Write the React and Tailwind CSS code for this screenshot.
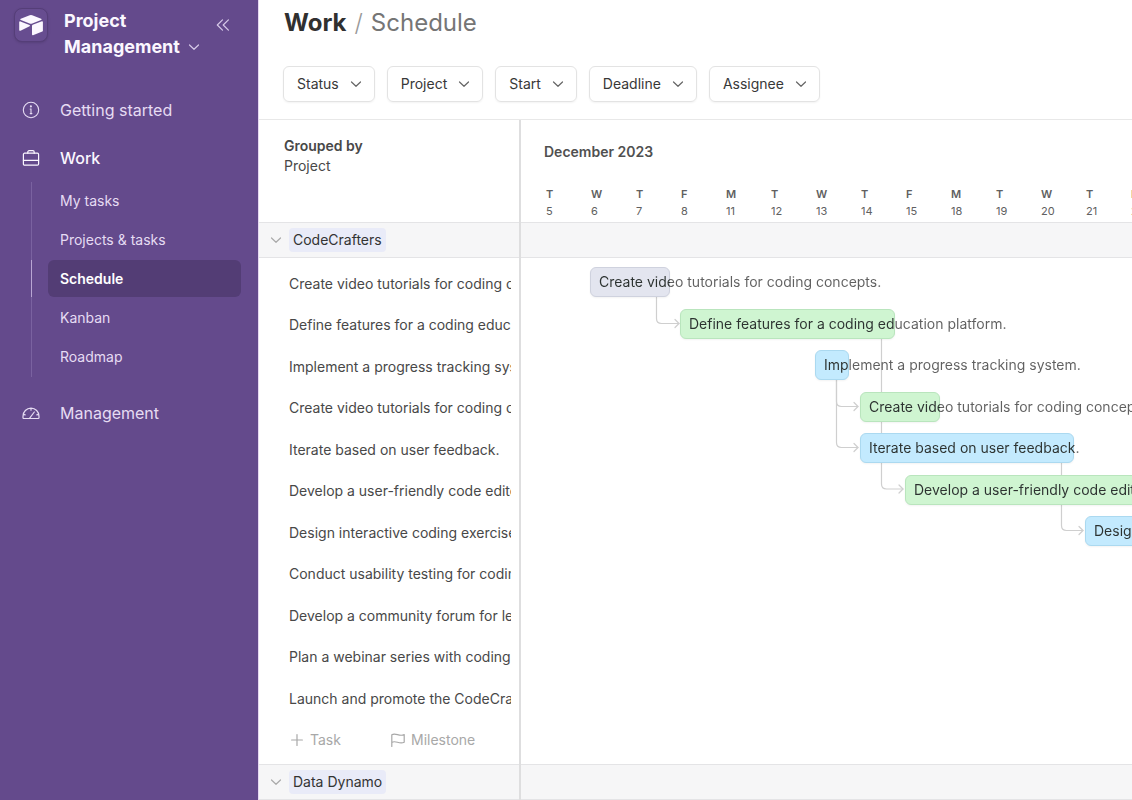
import React from "react";

const filters = ["Status", "Project", "Start", "Deadline", "Assignee"];

const views = ["My tasks", "Projects & tasks", "Schedule", "Kanban", "Roadmap"];

const tasks = [
  "Create video tutorials for coding concepts.",
  "Define features for a coding education platform.",
  "Implement a progress tracking system.",
  "Create video tutorials for coding concepts.",
  "Iterate based on user feedback.",
  "Develop a user-friendly code editor.",
  "Design interactive coding exercises.",
  "Conduct usability testing for coding platform.",
  "Develop a community forum for learners.",
  "Plan a webinar series with coding experts.",
  "Launch and promote the CodeCrafters platform.",
];

const days = [
  ["T", 5], ["W", 6], ["T", 7], ["F", 8], ["M", 11], ["T", 12], ["W", 13],
  ["T", 14], ["F", 15], ["M", 18], ["T", 19], ["W", 20], ["T", 21], ["F", 22],
];

const tones = {
  gray: "bg-[#e3e5ef] border-[#cfd2de]",
  green: "bg-[#cff5d1] border-[#b9e5bd]",
  blue: "bg-[#c3eafe] border-[#abd9f0]",
};

const bars = [
  { left: 69, top: 9, width: 80, tone: "gray" },
  { left: 159, top: 51, width: 215, tone: "green" },
  { left: 294, top: 92, width: 34, tone: "blue" },
  { left: 339, top: 134, width: 80, tone: "green" },
  { left: 339, top: 175, width: 214, tone: "blue" },
  { left: 384, top: 217, width: 260, tone: "green" },
  { left: 564, top: 258, width: 170, tone: "blue" },
];

const links = [
  "M135.5 39V60.5Q135.5 65.5 140.5 65.5H158",
  "M315.5 122V143.5Q315.5 148.5 320.5 148.5H337",
  "M315.5 122V184.5Q315.5 189.5 320.5 189.5H337",
  "M360.5 81V226Q360.5 231 365.5 231H382",
  "M540.5 205V267.5Q540.5 272.5 545.5 272.5H562",
];

const arrows = [[158, 65.5], [337, 148.5], [337, 189.5], [382, 231], [562, 272.5]];

function Chevron({ className = "" }) {
  return (
    <svg viewBox="0 0 12 12" className={`h-3 w-3 shrink-0 ${className}`} fill="none" stroke="currentColor" strokeWidth="1.2" strokeLinecap="round" strokeLinejoin="round" aria-hidden="true">
      <path d="M1.5 4 6 8.300 10.500 4" />
    </svg>
  );
}

function Logo() {
  return (
    <span className="flex h-[34px] w-[34px] shrink-0 items-center justify-center rounded-lg border border-[#553e78] bg-[#674d90] shadow-sm">
      <svg viewBox="0 0 26 22" className="h-[22px] w-[26px]" fill="#fbf7ff" aria-hidden="true">
        <path d="M11.700 1.200a3.200 3.200 0 0 1 2.500 0l8.900 3.600c.7.3.7 1 0 1.300l-8.900 3.500a3.800 3.800 0 0 1-2.600 0L2.800 6.100c-.7-.3-.7-1 0-1.300z" />
        <path d="M14 11.800c0-.4.3-.8.7-1l9.200-3.500c.5-.2 1 .1 1 .6v8.800c0 .4-.2.7-.6.9l-9.300 3.600c-.5.200-1-.1-1-.6z" />
        <path d="M11.600 12.200 2.500 16.700c-.6.3-1.300-.1-1.300-.8V8.200c0-.7.6-1 1.200-.8l9.100 3.600c.6.200.6.900.1 1.200z" />
      </svg>
    </span>
  );
}

function InfoIcon() {
  return (
    <svg viewBox="0 0 18 18" className="h-[18px] w-[18px] shrink-0" fill="none" stroke="currentColor" strokeWidth="1.1" strokeLinecap="round" aria-hidden="true">
      <circle cx="9" cy="9" r="7.700" />
      <path d="M8.200 8H9v4.600M8.200 12.600h1.700" />
      <circle cx="8.900" cy="5.400" r=".5" fill="currentColor" />
    </svg>
  );
}

function BriefcaseIcon() {
  return (
    <svg viewBox="0 0 18 18" className="h-[18px] w-[18px] shrink-0" fill="none" stroke="currentColor" strokeWidth="1.2" strokeLinecap="round" strokeLinejoin="round" aria-hidden="true">
      <rect x="1.400" y="4.200" width="15.200" height="12" rx="1.200" />
      <path d="M5.800 4.200V3a1.300 1.300 0 0 1 1.300-1.300h3.800A1.300 1.300 0 0 1 12.200 3v1.200M1.400 11.300h15.200" />
    </svg>
  );
}

function GaugeIcon() {
  return (
    <svg viewBox="0 0 18 18" className="h-[18px] w-[18px] shrink-0" fill="none" stroke="currentColor" strokeWidth="1.2" strokeLinecap="round" strokeLinejoin="round" aria-hidden="true">
      <path d="M1 13.800v-1.600a8 8 0 0 1 16 0v1.600a.7.7 0 0 1-.7.700H1.700a.7.7 0 0 1-.7-.700zM9 4.200v2M1.300 10.300l1.900.5M16.700 10.300l-1.900.5M7.500 14.300l4.800-6.300" />
    </svg>
  );
}

function Sidebar() {
  return (
    <aside className="flex w-[258px] shrink-0 flex-col bg-[#644a8c] text-[#e6dcf3]">
      <div className="flex items-start pl-3.5 pr-7 pt-2">
        <Logo />
        <h2 className="ml-4 flex-1 text-lg font-bold leading-[26px] text-[#fbf7ff]">
          <button type="button" className="text-left">
            Project
            <span className="flex items-center gap-2">
              Management
              <Chevron className="text-[#d6c9e8]" />
            </span>
          </button>
        </h2>
        <button type="button" aria-label="Collapse sidebar" className="mt-2.5 text-[#d6c9e8]">
          <svg viewBox="0 0 14 14" className="h-3.5 w-3.5" fill="none" stroke="currentColor" strokeWidth="1.2" strokeLinecap="round" strokeLinejoin="round" aria-hidden="true">
            <path d="M6.500 1.800 1.300 7l5.200 5.200M12.400 1.800 7.200 7l5.200 5.200" />
          </svg>
        </button>
      </div>
      <nav className="flex flex-col pl-[22px] pr-[17px] pt-[26px]">
        <a href="#start" className="flex h-12 items-center gap-5 text-base">
          <InfoIcon />
          Getting started
        </a>
        <a href="#work" className="flex h-12 items-center gap-5 text-base font-medium text-[#fbf7ff]">
          <BriefcaseIcon />
          Work
        </a>
        <ul className="ml-[9px] flex flex-col gap-0.5 border-l border-[#7a62a0] pb-0.5">
          {views.map((v) => {
            const on = v === "Schedule";
            return (
              <li key={v} className={on ? "-ml-px border-l border-[#b9a6d3] pl-4" : "pl-4"}>
                <a
                  href={"#" + v}
                  aria-current={on ? "page" : undefined}
                  className={`flex h-[37px] items-center rounded-md pl-3 text-sm ${on ? "bg-[#533d75] font-semibold text-white" : ""}`}
                >
                  {v}
                </a>
              </li>
            );
          })}
        </ul>
        <a href="#management" className="mt-3 flex h-12 items-center gap-5 text-base">
          <GaugeIcon />
          Management
        </a>
      </nav>
    </aside>
  );
}

function GroupRow({ name }) {
  return (
    <div className="flex h-9 items-center border-y border-[#e4e4e6] bg-[#f6f6f7]">
      {name && (
        <button type="button" className="ml-[11px] flex items-center gap-[7px] text-sm text-[#333]">
          <Chevron className="text-[#aaa]" />
          <span className="rounded bg-[#e9ebf8] px-1 py-0.5">{name}</span>
        </button>
      )}
    </div>
  );
}

function TaskList() {
  return (
    <section className="w-[262px] shrink-0 border-r-2 border-[#dededf]">
      <div className="h-[102px] pl-[25px] pt-4 text-sm text-[#484848]">
        <p className="font-semibold">Grouped by</p>
        <p>Project</p>
      </div>
      <GroupRow name="CodeCrafters" />
      <ul className="overflow-hidden pl-[30px] pr-2 pt-[5px] text-sm text-[#484848]">
        {tasks.map((t, i) => (
          <li key={i} className="flex items-center overflow-hidden whitespace-nowrap odd:h-[41px] even:h-[42px]">
            {t}
          </li>
        ))}
      </ul>
      <div className="flex h-[45px] items-center pb-[3px] pl-8 text-sm text-[#a8a8a8]">
        <button type="button" className="flex w-[100px] items-center gap-[7px]">
          <svg viewBox="0 0 12 12" className="h-3 w-3" fill="none" stroke="currentColor" strokeWidth="1.2" strokeLinecap="round" aria-hidden="true">
            <path d="M6 .6v10.800M.6 6h10.800" />
          </svg>
          Task
        </button>
        <button type="button" className="flex items-center gap-1.5">
          <svg viewBox="0 0 14 14" className="h-3.5 w-3.5" fill="none" stroke="currentColor" strokeWidth="1.2" strokeLinecap="round" strokeLinejoin="round" aria-hidden="true">
            <path d="M.8 13.400V1.800c4-2.400 7.400 2.200 12.400-.2v7.600c-5 2.400-8.400-2.200-12.400.2" />
          </svg>
          Milestone
        </button>
      </div>
      <GroupRow name="Data Dynamo" />
    </section>
  );
}

function Timeline() {
  return (
    <section className="min-w-0 flex-1 overflow-hidden">
      <div className="h-[102px] pt-[22px] text-[#505050]">
        <p className="pl-[23px] text-sm font-semibold">December 2023</p>
        <ol className="mt-6 flex pl-[25px] text-[11px] leading-[17px] text-[#606060]">
          {days.map(([d, n]) => (
            <li key={n} className="w-[45px] shrink-0">
              <span className="block font-semibold">{d}</span>
              <span className="block">{n}</span>
            </li>
          ))}
        </ol>
      </div>
      <GroupRow />
      <div className="relative h-[506px]">
        <svg className="absolute left-0 top-0 h-full w-[700px]" fill="none" stroke="#cfcfcf" strokeWidth="1.2" strokeLinecap="round" strokeLinejoin="round" aria-hidden="true">
          {links.map((d) => (
            <path key={d} d={d} />
          ))}
          {arrows.map(([x, y]) => (
            <path key={x + "-" + y} d={`M${x - 4} ${y - 4}l4 4l-4 4`} />
          ))}
        </svg>
        {bars.map((b, i) => (
          <div
            key={i}
            className={`absolute flex h-[30px] items-center rounded-md border pl-2 text-sm shadow-xs ${tones[b.tone]}`}
            style={{ left: b.left, top: b.top, width: b.width }}
          >
            <span
              className="whitespace-nowrap bg-clip-text text-transparent"
              style={{ backgroundImage: `linear-gradient(to right, #2c3230 ${b.width - 9}px, #606060 ${b.width - 9}px)` }}
            >
              {tasks[i]}
            </span>
          </div>
        ))}
      </div>
      <GroupRow />
    </section>
  );
}

export default function App() {
  return (
    <div className="flex h-screen overflow-hidden bg-white font-['Inter',sans-serif]">
      <Sidebar />
      <main className="flex min-w-0 flex-1 flex-col border-l border-[#e6d8f2]">
        <header className="border-b border-[#e8e8e8] pb-[17px] pl-6 pt-[7px]">
          <h1 className="flex gap-2 pl-px text-2xl text-[#757575]">
            <span className="font-bold text-[#303030]">Work</span>
            <span className="font-light text-[#999]">/</span>
            <span>Schedule</span>
          </h1>
          <div className="mt-[27px] flex gap-3">
            {filters.map((f) => (
              <button key={f} type="button" className="flex h-9 items-center gap-[11px] rounded-md border border-[#e3e3e3] pl-[13px] pr-3 text-sm text-[#383838] shadow-xs">
                {f}
                <Chevron className="text-[#666]" />
              </button>
            ))}
          </div>
        </header>
        <div className="flex min-h-0 flex-1 items-stretch">
          <TaskList />
          <Timeline />
        </div>
      </main>
    </div>
  );
}
